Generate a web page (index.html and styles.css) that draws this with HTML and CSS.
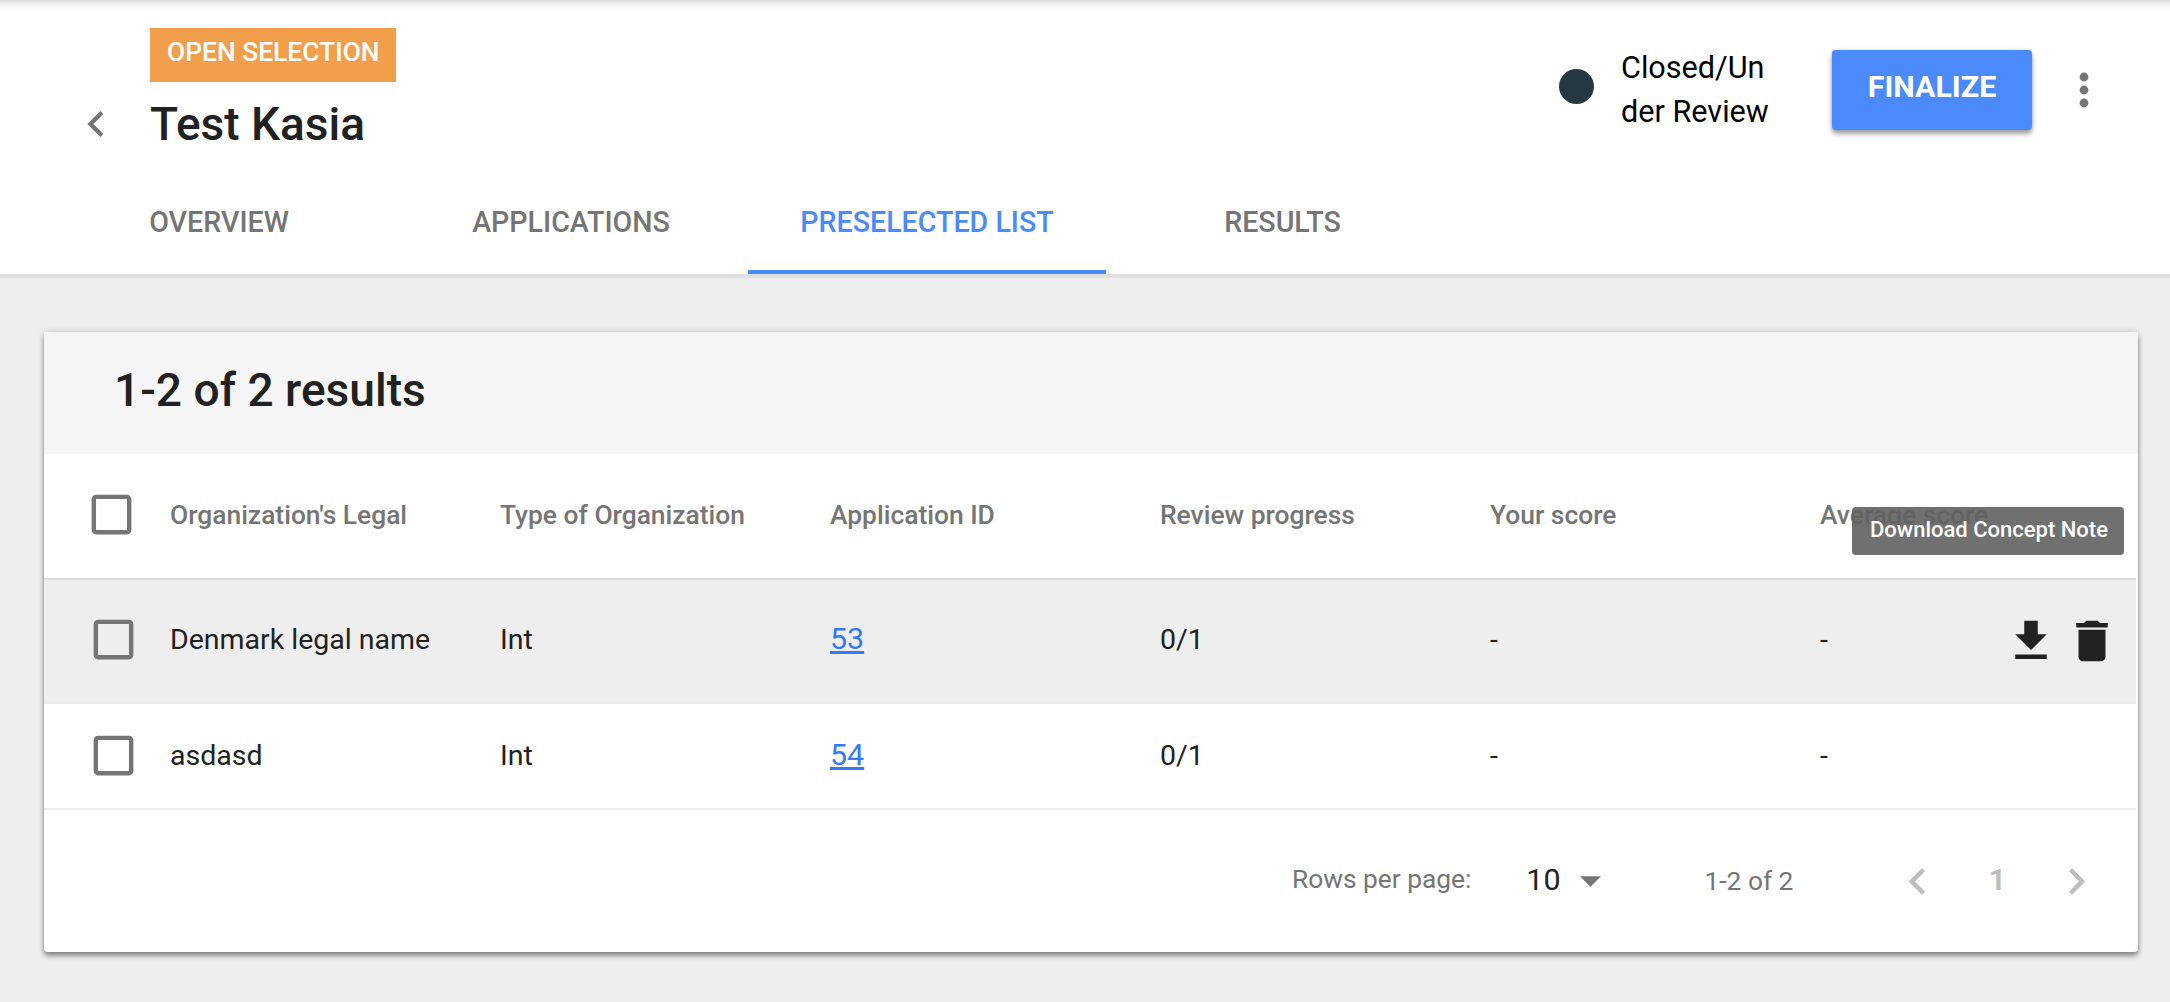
FILE: index.html
```html
<!DOCTYPE html>
<html lang="en">
<head>
<meta charset="utf-8">
<title>Test Kasia</title>
<link rel="stylesheet" href="styles.css">
</head>
<body>
<header class="page-header">
  <div class="header-top">
    <svg class="back" viewBox="0 0 24 24"><path d="M15.41 7.41L14 6l-6 6 6 6 1.41-1.41L10.83 12z"/></svg>
    <div class="heading">
      <span class="badge">OPEN SELECTION</span>
      <h1 class="title">Test Kasia</h1>
    </div>
    <div class="status">
      <span class="status-dot"></span>
      <span class="status-text">Closed/Un<br>der Review</span>
    </div>
    <button class="finalize">FINALIZE</button>
    <svg class="more" viewBox="0 0 10 36"><circle cx="5" cy="5" r="4.4"/><circle cx="5" cy="18" r="4.4"/><circle cx="5" cy="31" r="4.4"/></svg>
  </div>
  <nav class="tabs">
    <a class="tab">OVERVIEW</a>
    <a class="tab">APPLICATIONS</a>
    <a class="tab active">PRESELECTED LIST</a>
    <a class="tab">RESULTS</a>
  </nav>
</header>
<main class="card">
  <h2 class="card-title">1-2 of 2 results</h2>
  <div class="table">
    <div class="row head">
      <svg class="check" viewBox="0 0 24 24"><path d="M19 5v14H5V5h14m0-2H5c-1.1 0-2 .9-2 2v14c0 1.1.9 2 2 2h14c1.1 0 2-.9 2-2V5c0-1.1-.9-2-2-2z"/></svg>
      <span>Organization's Legal</span>
      <span>Type of Organization</span>
      <span>Application ID</span>
      <span>Review progress</span>
      <span>Your score</span>
      <span>Average score</span>
      <div class="tooltip">Download Concept Note</div>
    </div>
    <div class="row hovered">
      <svg class="check" viewBox="0 0 24 24"><path d="M19 5v14H5V5h14m0-2H5c-1.1 0-2 .9-2 2v14c0 1.1.9 2 2 2h14c1.1 0 2-.9 2-2V5c0-1.1-.9-2-2-2z"/></svg>
      <span>Denmark legal name</span>
      <span>Int</span>
      <a class="link">53</a>
      <span>0/1</span>
      <span>-</span>
      <span>-</span>
      <div class="actions">
        <svg class="icon" viewBox="0 0 24 24"><path d="M19 9h-4V3H9v6H5l7 7 7-7zM5 18v2h14v-2H5z"/></svg>
        <svg class="icon" viewBox="0 0 24 24"><path d="M6 19c0 1.1.9 2 2 2h8c1.1 0 2-.9 2-2V7H6v12zM19 4h-3.500l-1-1h-5l-1 1H5v2h14V4z"/></svg>
      </div>
    </div>
    <div class="row">
      <svg class="check" viewBox="0 0 24 24"><path d="M19 5v14H5V5h14m0-2H5c-1.1 0-2 .9-2 2v14c0 1.1.9 2 2 2h14c1.1 0 2-.9 2-2V5c0-1.1-.9-2-2-2z"/></svg>
      <span>asdasd</span>
      <span>Int</span>
      <a class="link">54</a>
      <span>0/1</span>
      <span>-</span>
      <span>-</span>
    </div>
  </div>
  <footer class="pager">
    <span class="label">Rows per page:</span>
    <span class="size">10</span>
    <svg class="caret" viewBox="0 0 22 11"><path d="M0 0h22L11 11z"/></svg>
    <span class="range">1-2 of 2</span>
    <svg class="arrow" viewBox="0 0 24 24"><path d="M15.41 7.41L14 6l-6 6 6 6 1.41-1.41L10.83 12z"/></svg>
    <span class="page">1</span>
    <svg class="arrow" viewBox="0 0 24 24"><path d="M10 6L8.59 7.41 13.17 12l-4.58 4.59L10 18l6-6z"/></svg>
  </footer>
</main>
</body>
</html>
```
FILE: styles.css
```css
* { box-sizing: border-box; }
body { margin: 0; height: 1002px; overflow: hidden; background: #eee; color: #212121; font-family: Roboto, sans-serif; }

.page-header { height: 278px; background: #fff linear-gradient(#dedede, #f3f3f3 5px, #fff 11px); border-bottom: 4px solid #e0e0e0; }
.header-top { display: flex; align-items: flex-start; height: 190px; padding-left: 70px; }
.back { width: 52px; height: 52px; margin: 98px 28px 0 0; fill: #757575; }
.heading { width: 1408px; padding-top: 28px; }
.badge { display: block; width: 246px; height: 54px; padding-left: 17px; background: #f29f4b; color: #fff; font-size: 26.4px; font-weight: 500; line-height: 49px; }
.title { margin: 14px 0 0; font-size: 46px; line-height: 56px; font-weight: 500; }
.status { display: flex; width: 274px; }
.status-dot { width: 35px; height: 35px; margin: 68.5px 27.5px 0 .5px; border-radius: 50%; background: #253842; }
.status-text { margin-top: 46px; font-size: 30.6px; line-height: 44px; color: #000; }
.finalize { width: 200px; height: 80px; margin-top: 50px; padding: 0 0 8px; border: 0; border-radius: 4px; background: #4b8afb; color: #fff; font: 700 30.4px Roboto, sans-serif; box-shadow: 0 4px 5px rgba(0, 0, 0, .35), 0 0 4px rgba(0, 0, 0, .15); }
.more { width: 10px; height: 36px; margin: 72px 0 0 47px; fill: #757575; }

.tabs { display: grid; grid-template-columns: 350px 354px 358px 353px; height: 84px; padding-left: 44px; }
.tab { padding-top: 14px; text-align: center; font-size: 28.6px; line-height: 36px; font-weight: 500; color: #757575; }
.tab.active { color: #4b8afb; border-bottom: 4px solid #4b8afb; }

.card { width: 2094px; height: 620px; margin: 54px 0 0 44px; background: #fff; border-radius: 4px; box-shadow: 0 4px 5px rgba(0, 0, 0, .38), 0 0 6px rgba(0, 0, 0, .18); }
.card-title { height: 122px; margin: 0; padding: 30px 0 0 70px; background: #f5f5f5; font-size: 46.1px; line-height: 56px; font-weight: 500; }

.table { width: 2092px; }
.row { position: relative; display: grid; grid-template-columns: 126px repeat(6, 330px); align-items: center; height: 106px; border-bottom: 2px solid #ececec; font-size: 28.5px; line-height: 36px; }
.head { height: 126px; padding-bottom: 2px; border-color: #dcdcdc; font-size: 26.4px; font-weight: 500; color: #757575; }
.hovered { height: 124px; padding-bottom: 2px; background: #eee; }
.check { width: 53px; height: 53px; margin: 0 0 1px 43px; fill: #757575; }
.head .check { margin-left: 41px; }
.link { font-size: 30.4px; padding-bottom: 2px; color: #3478fb; text-decoration: underline; }
.tooltip { position: absolute; left: 1808px; top: 53px; width: 272px; height: 48px; padding-left: 18px; border-radius: 4px; background: rgba(97, 97, 97, .9); color: #fff; font-size: 22px; line-height: 45px; }
.actions { position: absolute; left: 1960px; top: 34px; display: flex; gap: 7px; }
.icon { width: 54px; height: 54px; fill: #212121; }

.pager { display: flex; align-items: center; height: 142px; padding-left: 1248px; color: #757575; font-size: 26.3px; line-height: 36px; }
.label { padding-bottom: 4px; }
.size { margin-left: 55px; padding-bottom: 3px; font-size: 30.4px; color: #212121; }
.caret { width: 21px; height: 11px; margin-left: 19px; fill: #757575; }
.range { margin-left: 104px; }
.arrow { width: 53px; height: 53px; fill: #bdbdbd; }
.range + .arrow { margin-left: 98px; }
.page { width: 106px; padding-bottom: 2px; text-align: center; font-size: 30px; font-weight: 700; color: #bdbdbd; }
```
